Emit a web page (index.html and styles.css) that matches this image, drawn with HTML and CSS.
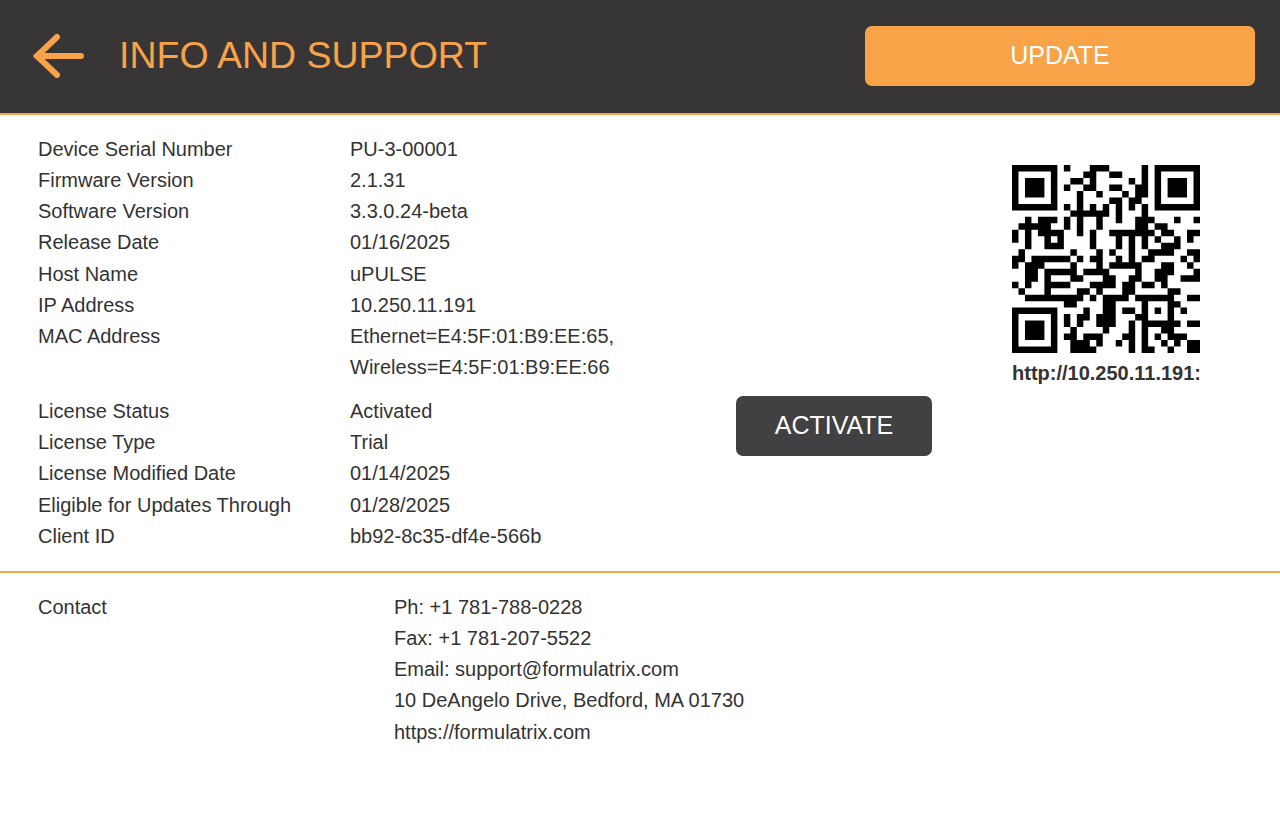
FILE: index.html
```html
<!DOCTYPE html>
<html lang="en">
<head>
    <meta charset="UTF-8">
    <meta name="viewport" content="width=device-width, initial-scale=1.0">
    <title>Info and Support</title>
    <link rel="stylesheet" href="styles.css">
</head>
<body>
    <header class="header">
        <svg class="back-icon" width="54" height="46" viewBox="0 0 54 46" fill="none">
            <path d="M26 4 L6 23 L26 42 M6 23 H50" stroke="#f9a348" stroke-width="6" stroke-linecap="round" stroke-linejoin="miter"/>
        </svg>
        <h1 class="title">INFO AND SUPPORT</h1>
        <button class="btn btn-update">UPDATE</button>
    </header>

    <section class="details">
        <div class="device-row">
            <dl class="info-list">
                <dt>Device Serial Number</dt><dd>PU-3-00001</dd>
                <dt>Firmware Version</dt><dd>2.1.31</dd>
                <dt>Software Version</dt><dd>3.3.0.24-beta</dd>
                <dt>Release Date</dt><dd>01/16/2025</dd>
                <dt>Host Name</dt><dd>uPULSE</dd>
                <dt>IP Address</dt><dd>10.250.11.191</dd>
                <dt>MAC Address</dt><dd>Ethernet=E4:5F:01:B9:EE:65,<br>Wireless=E4:5F:01:B9:EE:66</dd>
            </dl>
            <div class="qr-block">
                <svg class="qr-code" width="188" height="188" viewBox="0 0 29 29" fill="#000">
                    <path d="M0 0h7v1h-7zM8 0h1v1h-1zM12 0h3v1h-3zM20 0h1v1h-1zM22 0h7v1h-7z
                    M0 1h1v1h-1zM6 1h1v1h-1zM11 1h2v1h-2zM15 1h2v1h-2zM20 1h1v1h-1zM22 1h1v1h-1zM28 1h1v1h-1z
                    M0 2h1v1h-1zM2 2h3v1h-3zM6 2h1v1h-1zM9 2h2v1h-2zM12 2h1v1h-1zM18 2h1v1h-1zM20 2h1v1h-1zM22 2h1v1h-1zM24 2h3v1h-3zM28 2h1v1h-1z
                    M0 3h1v1h-1zM2 3h3v1h-3zM6 3h1v1h-1zM8 3h1v1h-1zM11 3h2v1h-2zM15 3h2v1h-2zM19 3h2v1h-2zM22 3h1v1h-1zM24 3h3v1h-3zM28 3h1v1h-1z
                    M0 4h1v1h-1zM2 4h3v1h-3zM6 4h1v1h-1zM10 4h1v1h-1zM13 4h1v1h-1zM17 4h1v1h-1zM19 4h2v1h-2zM22 4h1v1h-1zM24 4h3v1h-3zM28 4h1v1h-1z
                    M0 5h1v1h-1zM6 5h1v1h-1zM10 5h1v1h-1zM15 5h2v1h-2zM18 5h2v1h-2zM22 5h1v1h-1zM28 5h1v1h-1z
                    M0 6h7v1h-7zM8 6h1v1h-1zM10 6h1v1h-1zM12 6h1v1h-1zM14 6h1v1h-1zM16 6h1v1h-1zM18 6h1v1h-1zM20 6h1v1h-1zM22 6h7v1h-7z
                    M9 7h6v1h-6zM16 7h1v1h-1zM20 7h1v1h-1z
                    M2 8h1v1h-1zM4 8h3v1h-3zM8 8h1v1h-1zM10 8h1v1h-1zM13 8h1v1h-1zM16 8h1v1h-1zM19 8h3v1h-3zM25 8h1v1h-1zM28 8h1v1h-1z
                    M1 9h5v1h-5zM8 9h1v1h-1zM10 9h1v1h-1zM13 9h1v1h-1zM19 9h2v1h-2zM22 9h2v1h-2z
                    M0 10h1v1h-1zM2 10h1v1h-1zM4 10h4v1h-4zM10 10h1v1h-1zM12 10h1v1h-1zM15 10h7v1h-7zM23 10h2v1h-2zM27 10h2v1h-2z
                    M0 11h1v1h-1zM2 11h1v1h-1zM5 11h1v1h-1zM7 11h1v1h-1zM12 11h1v1h-1zM16 11h1v1h-1zM18 11h1v1h-1zM20 11h1v1h-1zM22 11h1v1h-1zM25 11h1v1h-1zM27 11h1v1h-1z
                    M2 12h1v1h-1zM5 12h3v1h-3zM12 12h1v1h-1zM16 12h1v1h-1zM18 12h1v1h-1zM20 12h1v1h-1zM23 12h3v1h-3z
                    M1 13h1v1h-1zM9 13h1v1h-1zM13 13h1v1h-1zM15 13h1v1h-1zM18 13h1v1h-1zM21 13h4v1h-4zM27 13h2v1h-2z
                    M0 14h2v1h-2zM3 14h6v1h-6zM10 14h1v1h-1zM12 14h2v1h-2zM16 14h1v1h-1zM18 14h1v1h-1zM20 14h2v1h-2zM26 14h1v1h-1zM28 14h1v1h-1z
                    M0 15h1v1h-1zM2 15h3v1h-3zM9 15h1v1h-1zM13 15h1v1h-1zM15 15h5v1h-5zM23 15h2v1h-2zM27 15h1v1h-1z
                    M2 16h2v1h-2zM5 16h5v1h-5zM11 16h4v1h-4zM19 16h1v1h-1zM22 16h3v1h-3zM28 16h1v1h-1z
                    M2 17h2v1h-2zM5 17h1v1h-1zM9 17h2v1h-2zM14 17h2v1h-2zM18 17h2v1h-2zM22 17h2v1h-2zM26 17h3v1h-3z
                    M0 18h1v1h-1zM2 18h1v1h-1zM5 18h4v1h-4zM12 18h4v1h-4zM17 18h2v1h-2zM20 18h2v1h-2zM23 18h1v1h-1z
                    M1 19h1v1h-1zM5 19h1v1h-1zM10 19h2v1h-2zM13 19h1v1h-1zM17 19h2v1h-2zM24 19h2v1h-2z
                    M2 20h9v1h-9zM12 20h1v1h-1zM14 20h4v1h-4zM19 20h6v1h-6zM27 20h2v1h-2z
                    M8 21h2v1h-2zM14 21h2v1h-2zM20 21h1v1h-1zM24 21h2v1h-2z
                    M0 22h7v1h-7zM11 22h1v1h-1zM14 22h2v1h-2zM17 22h2v1h-2zM20 22h1v1h-1zM22 22h1v1h-1zM24 22h1v1h-1zM26 22h1v1h-1z
                    M0 23h1v1h-1zM6 23h1v1h-1zM8 23h1v1h-1zM10 23h2v1h-2zM13 23h3v1h-3zM19 23h2v1h-2zM24 23h1v1h-1z
                    M0 24h1v1h-1zM2 24h3v1h-3zM6 24h1v1h-1zM8 24h1v1h-1zM10 24h1v1h-1zM13 24h3v1h-3zM18 24h1v1h-1zM20 24h6v1h-6zM27 24h2v1h-2z
                    M0 25h1v1h-1zM2 25h3v1h-3zM6 25h1v1h-1zM9 25h1v1h-1zM14 25h1v1h-1zM18 25h1v1h-1zM20 25h1v1h-1zM23 25h2v1h-2z
                    M0 26h1v1h-1zM2 26h3v1h-3zM6 26h1v1h-1zM8 26h2v1h-2zM11 26h3v1h-3zM17 26h2v1h-2zM20 26h1v1h-1zM22 26h1v1h-1zM24 26h3v1h-3z
                    M0 27h1v1h-1zM6 27h1v1h-1zM9 27h3v1h-3zM13 27h1v1h-1zM16 27h1v1h-1zM18 27h1v1h-1zM20 27h1v1h-1zM23 27h1v1h-1zM25 27h1v1h-1zM27 27h2v1h-2z
                    M0 28h7v1h-7zM9 28h4v1h-4zM18 28h1v1h-1zM20 28h2v1h-2zM24 28h1v1h-1zM27 28h2v1h-2z"/>
                </svg>
                <div class="qr-caption">http://10.250.11.191:</div>
            </div>
        </div>

        <div class="license-row">
            <dl class="info-list">
                <dt>License Status</dt><dd>Activated</dd>
                <dt>License Type</dt><dd>Trial</dd>
                <dt>License Modified Date</dt><dd>01/14/2025</dd>
                <dt>Eligible for Updates Through</dt><dd>01/28/2025</dd>
                <dt>Client ID</dt><dd>bb92-8c35-df4e-566b</dd>
            </dl>
            <button class="btn btn-activate">ACTIVATE</button>
        </div>
    </section>

    <section class="contact">
        <div class="contact-label">Contact</div>
        <div>
            <div>Ph: +1 781-788-0228</div>
            <div>Fax: +1 781-207-5522</div>
            <div>Email: support@formulatrix.com</div>
            <div>10 DeAngelo Drive, Bedford, MA 01730</div>
            <div>https://formulatrix.com</div>
        </div>
    </section>
</body>
</html>
```

FILE: styles.css
```css
:root {
    --orange: #f9a348;
    --header-bg: #373535;
    --button-dark: #414042;
    --text-color: #333333;
}

* {
    margin: 0;
    padding: 0;
    box-sizing: border-box;
}

body {
    font-family: "Liberation Sans", Arial, sans-serif;
    font-size: 20px;
    line-height: 31.25px;
    background-color: white;
    color: var(--text-color);
}

.header {
    display: flex;
    align-items: center;
    height: 115px;
    padding: 0 25px 2px 31px;
    background-color: var(--header-bg);
    border-bottom: 2px solid var(--orange);
}

.back-icon {
    flex-shrink: 0;
}

.title {
    flex: 1;
    margin-left: 34px;
    font-size: 37.5px;
    font-weight: 400;
    line-height: 1;
    color: var(--orange);
}

.btn {
    height: 60px;
    border: none;
    border-radius: 7px;
    font-family: inherit;
    font-size: 25px;
    color: white;
    cursor: pointer;
}

.btn-update {
    width: 390px;
    background-color: var(--orange);
}

.btn-activate {
    width: 196px;
    background-color: var(--button-dark);
}

.details {
    padding: 18.5px 0 19px 38px;
    border-bottom: 2px solid var(--orange);
}

.device-row,
.license-row {
    display: flex;
    align-items: flex-start;
}

.license-row {
    margin-top: 6.5px;
}

.info-list {
    display: grid;
    grid-template-columns: 312px 1fr;
    width: 698px;
}

.qr-block {
    width: 188px;
    margin: 31.5px 0 0 276px;
}

.qr-code {
    display: block;
}

.qr-caption {
    margin-top: 5px;
    font-weight: 700;
    white-space: nowrap;
}

.contact {
    display: flex;
    padding: 18.5px 38px;
}

.contact-label {
    width: 356px;
}
```
